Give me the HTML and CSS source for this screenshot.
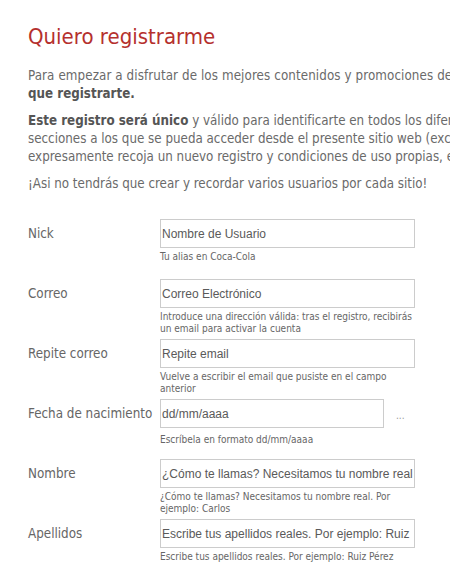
FILE: index.html
```html
<!DOCTYPE html>
<html lang="es">
<head>
<meta charset="utf-8">
<title>Quiero registrarme</title>
<link rel="stylesheet" href="styles.css">
</head>
<body>
<div class="page">
  <h1 class="title">Quiero registrarme</h1>
  <p class="intro"><span class="wide">Para empezar a disfrutar de los mejores contenidos y promociones de Coca-Cola</span> <b>tienes</b><br><b>que registrarte.</b></p>
  <p class="intro"><b>Este registro será único</b> y válido para identificarte en todos los diferentes sitios y<br>secciones a los que se pueda acceder desde el presente sitio web (excepto aquellos que<br>expresamente recoja un nuevo registro y condiciones de uso propias, en cuyo caso).</p>
  <p class="intro">¡Asi no tendrás que crear y recordar varios usuarios por cada sitio!</p>

  <form class="form">
    <div class="row">
      <label class="label">Nick</label>
      <div class="field">
        <input class="input" type="text" placeholder="Nombre de Usuario">
        <div class="help">Tu alias en Coca-Cola</div>
      </div>
    </div>
    <div class="row">
      <label class="label">Correo</label>
      <div class="field">
        <input class="input" type="text" placeholder="Correo Electrónico">
        <div class="help">Introduce una dirección válida: tras el registro, recibirás<br>un email para activar la cuenta</div>
      </div>
    </div>
    <div class="row">
      <label class="label">Repite correo</label>
      <div class="field">
        <input class="input" type="text" placeholder="Repite email">
        <div class="help">Vuelve a escribir el email que pusiste en el campo<br>anterior</div>
      </div>
    </div>
    <div class="row">
      <label class="label">Fecha de nacimiento</label>
      <div class="field">
        <div class="date-line">
          <input class="input input-date" type="text" placeholder="dd/mm/aaaa">
          <span class="dots">...</span>
        </div>
        <div class="help help-date">Escríbela en formato dd/mm/aaaa</div>
      </div>
    </div>
    <div class="row">
      <label class="label">Nombre</label>
      <div class="field">
        <input class="input" type="text" placeholder="¿Cómo te llamas? Necesitamos tu nombre real. Por ejemplo: Carlos">
        <div class="help">¿Cómo te llamas? Necesitamos tu nombre real. Por<br>ejemplo: Carlos</div>
      </div>
    </div>
    <div class="row">
      <label class="label">Apellidos</label>
      <div class="field">
        <input class="input" type="text" placeholder="Escribe tus apellidos reales. Por ejemplo: Ruiz Pérez">
        <div class="help">Escribe tus apellidos reales. Por ejemplo: Ruiz Pérez</div>
      </div>
    </div>
  </form>
</div>
</body>
</html>
```
FILE: styles.css
```css
html, body {
  margin: 0;
  padding: 0;
  background: #ffffff;
  overflow: hidden;
}

body {
  font-family: "DejaVu Sans Condensed", "DejaVu Sans", sans-serif;
  font-stretch: condensed;
  color: #666666;
}

.page {
  width: 640px;
  padding: 22px 0 0 28px;
}

.title {
  margin: 0;
  font-size: 22px;
  line-height: 30px;
  font-weight: normal;
  color: #b5302d;
}

.intro {
  margin: 0;
  font-size: 13.25px;
  line-height: 18px;
  white-space: nowrap;
  color: #6a6a6a;
}

.intro .wide {
  letter-spacing: 0.1px;
}

.title + .intro {
  margin-top: 15px;
}

.intro + .intro {
  margin-top: 9px;
}

.intro b {
  color: #555555;
}

.form {
  margin-top: 26px;
  display: flex;
  flex-direction: column;
}

.row {
  display: flex;
  align-items: flex-start;
  height: 60px;
}

.label {
  width: 132px;
  flex: none;
  font-size: 13.3px;
  line-height: 29px;
  color: #666666;
}

.field {
  display: flex;
  flex-direction: column;
}

.input {
  box-sizing: border-box;
  width: 255px;
  height: 29px;
  margin: 0;
  padding: 0 1px;
  border: 1px solid #cccccc;
  border-radius: 0;
  background: #ffffff;
  font-family: "Liberation Sans", Arial, sans-serif;
  font-size: 12px;
  color: #555555;
  outline: none;
}

.input::placeholder {
  color: #5a5a5a;
  opacity: 1;
}

.date-line {
  display: flex;
  align-items: center;
}

.input-date {
  width: 224px;
}

.dots {
  margin-left: 12px;
  margin-top: 4px;
  font-size: 10px;
  color: #999999;
}

.help {
  margin-top: 3px;
  font-size: 10px;
  line-height: 12px;
  color: #666666;
}

.help-date {
  margin-top: 6px;
}
```
